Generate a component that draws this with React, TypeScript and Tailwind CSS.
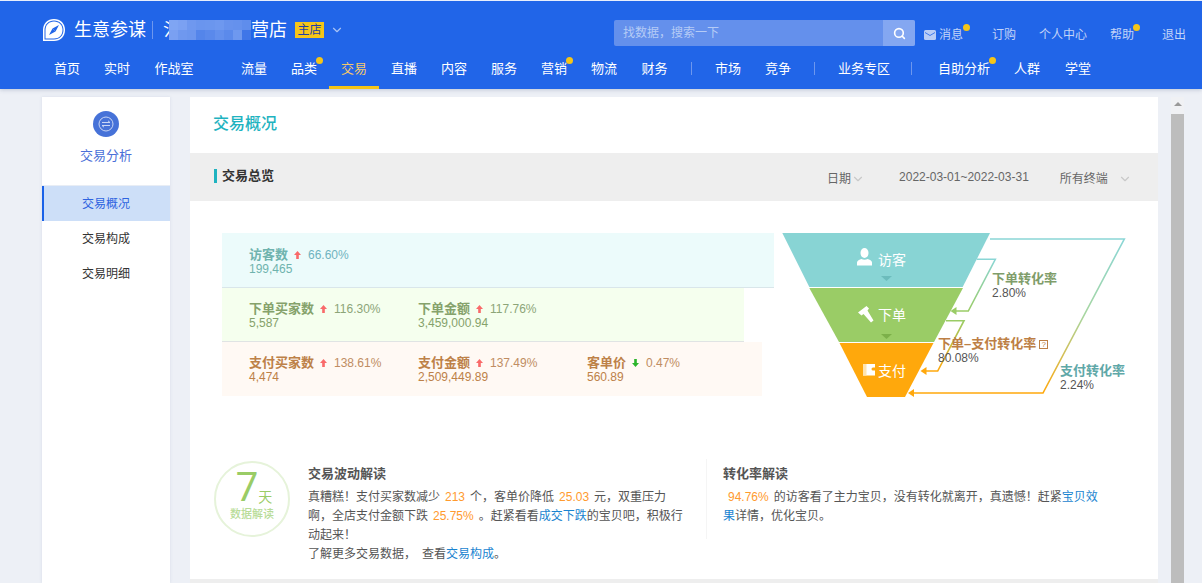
import React from 'react';
import { ChevronDown, Search } from 'lucide-react';

const font = "font-['Liberation_Sans','Noto_Sans_CJK_SC',sans-serif]";

const mosaic = [
  'bg-[#7fa5f3]', 'bg-[#7ba1f2]', 'bg-[#6f98ef]', 'bg-[#6a95ee]', 'bg-[#6b96ee]', 'bg-[#6e98ef]', 'bg-[#6792ed]', 'bg-[#6591ed]', 'bg-[#5f8dec]',
  'bg-[#7aa0f2]', 'bg-[#6f98ef]', 'bg-[#6c96ee]', 'bg-[#5485ea]', 'bg-[#5a89eb]', 'bg-[#6390ed]', 'bg-[#5b8aeb]', 'bg-[#6e98ef]', 'bg-[#3f76e8]',
];

const Dot = () => (
  <span className="absolute -top-[2px] -right-[6px] w-[7px] h-[7px] rounded-full bg-[#f5c518]" />
);

const NavItem = ({ label, dot, active, className = 'w-[50px]' }: { label: string; dot?: boolean; active?: boolean; className?: string }) => (
  <div className={`h-[42px] flex items-center justify-center text-[13px] whitespace-nowrap ${className} ${active ? 'text-[#f5c96a] border-b-[3px] border-[#f5c518] pt-[4px]' : 'text-white pt-[1px]'}`}>
    <span className="relative">
      {label}
      {dot && <Dot />}
    </span>
  </div>
);

const NavSep = ({ className }: { className: string }) => <span className={`w-px h-[13px] bg-[#6d97ee] ${className}`} />;

const Header = () => (
  <header className="h-[89px] border-t border-[#e8eefc] bg-[#2165e8] shadow-[0_1px_4px_rgba(60,80,120,0.25)] relative z-10">
    <div className="h-[46px] flex items-center pl-[42px] pt-[12px] whitespace-nowrap">
      <svg width="24" height="24" viewBox="0 0 24 24" className="shrink-0">
        <path d="M1 23V12C1 5.500 5.500 1 12 1s11 4.500 11 11-4.500 11-11 11Z" fill="#fff" />
        <path d="M2.500 21.500V12C2.500 6.500 6.500 2.500 12 2.500c5.500 0 9.500 4 9.500 9.500s-4 9.500-9.500 9.500Z" fill="#2165e8" />
        <path d="M3.500 20.500V12C3.500 7 7 3.500 12 3.500c5 0 8.500 3.500 8.500 8.500s-3.500 8.500-8.500 8.500Z" fill="#fff" />
        <path d="M17 7 13.500 13.500 10.500 10.500Z" fill="#2165e8" />
        <path d="M7 17 10.500 10.500l3 3Z" fill="#2165e8" />
      </svg>
      <span className="ml-[8px] text-[18px] text-white leading-none">生意参谋</span>
      <span className="ml-[6px] w-px h-[18px] bg-[#6d97ee]" />
      <span className="ml-[10px] w-[6px] text-[18px] text-white leading-none">氵</span>
      <div className="relative grid grid-cols-9 w-[82px] h-[20px]">
        {mosaic.map((c, i) => (
          <span key={i} className={c} />
        ))}
      </div>
      <span className="text-[18px] text-white leading-none">营店</span>
      <span className="ml-[8px] w-[29px] h-[16px] bg-[#f5c518] text-[#1d3fa8] text-[12px] leading-[16px] text-center">主店</span>
      <ChevronDown size={14} className="ml-[6px] text-[#a9c3f5]" />
      <div className="ml-[270px] w-[301px] h-[26px] flex rounded-[2px] overflow-hidden bg-[#6490ec] mt-[6px] shrink-0">
        <span className="w-[269px] pl-[9px] leading-[26px] text-[12px] text-[#b5cbf6]">找数据&#xFF0C;搜索一下</span>
        <span className="w-[32px] flex items-center justify-center bg-[#84a7f1]">
          <Search size={13} strokeWidth={3} className="text-white" />
        </span>
      </div>
      <div className="ml-[9px] flex items-center text-[12px] text-[#c3d4f8] mt-[10px]">
        <svg width="12" height="10" viewBox="0 0 12 10" className="shrink-0">
          <rect width="12" height="10" rx="1.500" fill="#b9cdf6" />
          <path d="M1 2.500 6 5.500 11 2.500" fill="none" stroke="#2165e8" strokeWidth="0.800" />
        </svg>
        <span className="relative ml-[3px] w-[25px]">消息<Dot /></span>
        <span className="ml-[28px]">订购</span>
        <span className="ml-[23px]">个人中心</span>
        <span className="relative ml-[23px]">帮助<Dot /></span>
        <span className="ml-[28px]">退出</span>
      </div>
    </div>
    <nav className="flex items-center pl-[42px]">
      <NavItem label="首页" />
      <NavItem label="实时" />
      <NavItem label="作战室" className="w-[64px]" />
      <span className="w-[23px]" />
      <NavItem label="流量" />
      <NavItem label="品类" dot />
      <NavItem label="交易" active />
      <NavItem label="直播" />
      <NavItem label="内容" />
      <NavItem label="服务" />
      <NavItem label="营销" dot />
      <NavItem label="物流" />
      <NavItem label="财务" className="w-[51px]" />
      <NavSep className="ml-[11px]" />
      <NavItem label="市场" className="w-[50px] ml-[11px]" />
      <NavItem label="竞争" />
      <NavSep className="ml-[11px]" />
      <NavItem label="业务专区" className="w-[76px] ml-[11px]" />
      <NavSep className="ml-[9px]" />
      <NavItem label="自助分析" dot className="w-[76px] ml-[14px]" />
      <NavItem label="人群" className="w-[50px] ml-[0px]" />
      <NavItem label="学堂" className="w-[50px] ml-[1px]" />
    </nav>
  </header>
);

const Sidebar = () => (
  <aside className="w-[128px] bg-white shrink-0 shadow-[0_0_3px_rgba(100,120,160,0.15)]">
    <div className="h-[89px] border-b border-[#e8edf5] flex flex-col items-center pt-[14px]">
      <div className="w-[26px] h-[26px] rounded-full bg-[#4672d8] flex items-center justify-center">
        <svg width="16" height="16" viewBox="0 0 16 16" fill="none" stroke="#c9d6f5" strokeWidth="1">
          <circle cx="8" cy="8" r="7" />
          <path d="M4 6.500h8L10 4.800M12 9.500H4L6 11.200" />
        </svg>
      </div>
      <span className="mt-[10px] text-[13px] leading-[18px] text-[#4a6fd8]">交易分析</span>
    </div>
    <div className="h-[35px] bg-[#cddff8] border-l-[2px] border-[#1a62e8] flex items-center justify-center pr-[2px] text-[12px] text-[#2e63e0]">交易概况</div>
    <div className="h-[35px] flex items-center justify-center text-[12px] text-[#333]">交易构成</div>
    <div className="h-[35px] flex items-center justify-center text-[12px] text-[#333]">交易明细</div>
  </aside>
);

const Up = () => (
  <svg width="7" height="8" viewBox="0 0 8 9" className="shrink-0">
    <path d="M4 0 8 4.500H5.500V9h-3V4.500H0Z" fill="#f96a6a" />
  </svg>
);

const Down = () => (
  <svg width="7" height="8" viewBox="0 0 8 9" className="shrink-0">
    <path d="M4 9 8 4.500H5.500V0h-3v4.500H0Z" fill="#2bb52b" />
  </svg>
);

const Metric = ({ label, pct, value, down, color, pctColor, width = 'w-[169px]' }: { label: string; pct: string; value: string; down?: boolean; color: string; pctColor: string; width?: string }) => (
  <div className={`${width} leading-[14px]`}>
    <div className="flex items-center h-[14px]">
      <span className={`text-[13px] font-bold ${color}`}>{label}</span>
      <span className="ml-[6px]">{down ? <Down /> : <Up />}</span>
      <span className={`ml-[7px] text-[12px] ${pctColor}`}>{pct}</span>
    </div>
    <div className={`text-[12px] ${color}`}>{value}</div>
  </div>
);

const Bars = () => (
  <div className="ml-[32px] mt-[3px] w-[552px] shrink-0">
    <div className="h-[55px] w-[552px] bg-[#ecfbfb] border-b border-[#d9e6ea] pl-[27px] pt-[15px] flex">
      <Metric label="访客数" pct="66.60%" value="199,465" color="text-[#6fb3ae]" pctColor="text-[#6fb3c0]" />
    </div>
    <div className="h-[54px] w-[522px] bg-[#f5ffee] border-b border-[#e0e4e4] pl-[27px] pt-[14px] flex">
      <Metric label="下单买家数" pct="116.30%" value="5,587" color="text-[#85a26b]" pctColor="text-[#8ca578]" />
      <Metric label="下单金额" pct="117.76%" value="3,459,000.94" color="text-[#85a26b]" pctColor="text-[#8ca578]" />
    </div>
    <div className="h-[54px] w-[540px] bg-[#fff9f4] pl-[27px] pt-[14px] flex">
      <Metric label="支付买家数" pct="138.61%" value="4,474" color="text-[#bd8148]" pctColor="text-[#c08d62]" />
      <Metric label="支付金额" pct="137.49%" value="2,509,449.89" color="text-[#bd8148]" pctColor="text-[#c08d62]" />
      <Metric label="客单价" pct="0.47%" value="560.89" down color="text-[#bd8148]" pctColor="text-[#c08d62]" width="w-[150px]" />
    </div>
  </div>
);

const Funnel = () => (
  <div className="relative ml-[6px] w-[350px] h-[170px] shrink-0">
    <svg width="350" height="170" viewBox="780 230 350 170" className="absolute inset-0">
      <defs>
        <linearGradient id="outer" gradientUnits="userSpaceOnUse" x1="0" y1="239" x2="0" y2="393">
          <stop offset="0" stopColor="#8ad6d6" />
          <stop offset="0.5" stopColor="#a8d6a0" />
          <stop offset="1" stopColor="#ffa80c" />
        </linearGradient>
        <linearGradient id="first" gradientUnits="userSpaceOnUse" x1="0" y1="259" x2="0" y2="311">
          <stop offset="0" stopColor="#8ad6d6" />
          <stop offset="1" stopColor="#9acc66" />
        </linearGradient>
        <linearGradient id="second" gradientUnits="userSpaceOnUse" x1="0" y1="321" x2="0" y2="371">
          <stop offset="0" stopColor="#9acc66" />
          <stop offset="1" stopColor="#ffa80c" />
        </linearGradient>
      </defs>
      <path d="M782.300 233H990L962.700 287H809.300Z" fill="#88d4d4" />
      <path d="M809.300 288H963L934 342H839Z" fill="#9acc66" />
      <path d="M839.500 343H933.500L905 397H867Z" fill="#ffa80c" />
      <path d="M881 276h11l-5.500 5Z" fill="#6cbcbc" />
      <path d="M881 334h11l-5.500 5Z" fill="#7cb04a" />

      <path d="M990 239H1124.300L1043 393H912" fill="none" stroke="url(#outer)" strokeWidth="1.600" />
      <path d="M908 393l6-4v8Z" fill="#ffa80c" />
      <path d="M976.700 259.300H995.300L968.300 311H954" fill="none" stroke="url(#first)" strokeWidth="1.600" />
      <path d="M950.500 311l6-4v8Z" fill="#9acc66" />
      <path d="M946 320.700H964L937.700 371H924" fill="none" stroke="url(#second)" strokeWidth="1.600" />
      <path d="M920.500 371l6-4v8Z" fill="#ffa80c" />

      {/* person */}
      <ellipse cx="864.500" cy="253" rx="4" ry="5" fill="#fff" />
      <path d="M857 265.500v-3c0-2 2.500-3 4.500-3.500 1.500 1 4.500 1 6 0 2 .5 4.500 1.500 4.500 3.500v3Z" fill="#fff" />
      {/* hammer */}
      <path d="M858 312.500 866.500 306l2.500 2.500-1.500 2 6 10-2.500 2-7.500-8.500-2 1.500Z" fill="#fff" />
      {/* wallet */}
      <path d="M863 364h12v3.500h-2a1.500 1.500 0 0 0 0 3h2v5h-12Z" fill="#fff" />
      <rect x="863" y="364" width="3.500" height="11.500" fill="#ffe4b0" />
    </svg>
    <span className="absolute left-[98px] top-[21px] text-[14px] leading-[18px] text-white">访客</span>
    <span className="absolute left-[98px] top-[76px] text-[14px] leading-[18px] text-white">下单</span>
    <span className="absolute left-[98px] top-[132px] text-[14px] leading-[18px] text-white">支付</span>
    <div className="absolute left-[212px] top-[42px] leading-[14px]">
      <div className="text-[13px] font-bold text-[#7f9d6a]">下单转化率</div>
      <div className="text-[12px] text-[#555]">2.80%</div>
    </div>
    <div className="absolute left-[158px] top-[107px] leading-[14px] whitespace-nowrap">
      <div className="text-[13px] font-bold text-[#bd7f45] flex items-center">
        下单&#x2013;支付转化率
        <span className="ml-[3px] w-[9px] h-[9px] border border-[#bd7f45] text-[8px] leading-[8px] text-center font-normal">?</span>
      </div>
      <div className="text-[12px] text-[#555]">80.08%</div>
    </div>
    <div className="absolute left-[280px] top-[134px] leading-[14px]">
      <div className="text-[13px] font-bold text-[#5fa8a8] whitespace-nowrap">支付转化率</div>
      <div className="text-[12px] text-[#555]">2.24%</div>
    </div>
  </div>
);

const Hl = ({ children }: { children: React.ReactNode }) => <span className="text-[#ff9a2e] mx-[5px]">{children}</span>;
const Link = ({ children }: { children: React.ReactNode }) => <a className="text-[#1a84d0]">{children}</a>;

const Insights = () => (
  <div className="flex mt-[65px] pl-[24px]">
    <div className="w-[76px] h-[76px] rounded-full border-2 border-[#e6f3da] shrink-0 mt-[-4px] flex flex-col items-center pt-[9px] text-[#9acc66]">
      <div className="flex items-end leading-none h-[32px]">
        <span className="text-[40px] font-['Roboto',sans-serif] leading-[32px] pl-[4px]">7</span>
        <span className="text-[14px] leading-[14px]">天</span>
      </div>
      <span className="mt-[3px] text-[11px] leading-[14px] font-medium text-[#b8dc98]">数据解读</span>
    </div>
    <div className="ml-[18px] w-[382px] text-[12px] leading-[19px] text-[#555] shrink-0">
      <h3 className="text-[13px] font-bold text-[#555] leading-[17px] mb-[6px]">交易波动解读</h3>
      <p>
        真糟糕&#xFF01;支付买家数减少<Hl>213</Hl>个&#xFF0C;客单价降低<Hl>25.03</Hl>元&#xFF0C;双重压力啊&#xFF0C;全店支付金额下跌<Hl>25.75%</Hl>。赶紧看看<Link>成交下跌</Link>的宝贝吧&#xFF0C;积极行动起来&#xFF01;
      </p>
      <p>了解更多交易数据&#xFF0C;<span className="ml-[6px]">查看</span><Link>交易构成</Link>。</p>
    </div>
    <div className="ml-[16px] border-l border-[#f5f5f5] pl-[16px] w-[395px] h-[80px] mt-[-6px] pt-[6px] text-[12px] leading-[19px] text-[#555]">
      <h3 className="text-[13px] font-bold text-[#555] leading-[17px] mb-[6px]">转化率解读</h3>
      <p className="w-[376px]">
        <Hl>94.76%</Hl>的访客看了主力宝贝&#xFF0C;没有转化就离开&#xFF0C;真遗憾&#xFF01;赶紧<Link>宝贝效果</Link>详情&#xFF0C;优化宝贝。
      </p>
    </div>
  </div>
);

const Main = () => (
  <main className="w-[968px] shrink-0 flex flex-col">
    <div className="h-[56px] bg-white pl-[23px] pb-[2px] flex items-center text-[16px] font-medium text-[#1fb3c0]">交易概况</div>
    <div className="h-[48px] bg-[#eeeeee] pl-[24px] flex items-center text-[12px] text-[#666] whitespace-nowrap">
      <span className="w-[3px] h-[14px] bg-[#1fb3c0] mt-[-2px] shrink-0" />
      <span className="ml-[5px] text-[13px] font-bold text-[#333] mt-[-2px]">交易总览</span>
      <span className="ml-[553px] mt-[4px]">日期</span>
      <ChevronDown size={14} className="mt-[4px] text-[#c8c8c8] shrink-0" />
      <span className="ml-[34px]">2022-03-01~2022-03-31</span>
      <span className="ml-[31px] mt-[4px]">所有终端</span>
      <ChevronDown size={14} className="ml-[10px] mt-[4px] text-[#c8c8c8] shrink-0" />
    </div>
    <section className="h-[378px] bg-white">
      <div className="flex pt-[29px]">
        <Bars />
        <Funnel />
      </div>
      <Insights />
    </section>
    <div className="h-[4px] bg-[#eeeeee]" />
  </main>
);

const Scrollbar = () => (
  <div className="ml-[13px] w-[13px] shrink-0 flex flex-col">
    <div className="h-[17px] bg-[#f0f1f4] flex justify-center pt-[5px]">
      <span className="w-0 h-0 border-x-[4px] border-x-transparent border-b-[4px] border-b-[#999]" />
    </div>
    <div className="flex-1 bg-[#bdbdbd]" />
  </div>
);

export default function App() {
  return (
    <div className={`w-[1202px] h-[583px] overflow-hidden bg-[#edf0f6] ${font}`}>
      <Header />
      <div className="flex pl-[42px] pt-[8px] h-[494px]">
        <Sidebar />
        <div className="w-[20px] shrink-0" />
        <Main />
        <Scrollbar />
      </div>
    </div>
  );
}
